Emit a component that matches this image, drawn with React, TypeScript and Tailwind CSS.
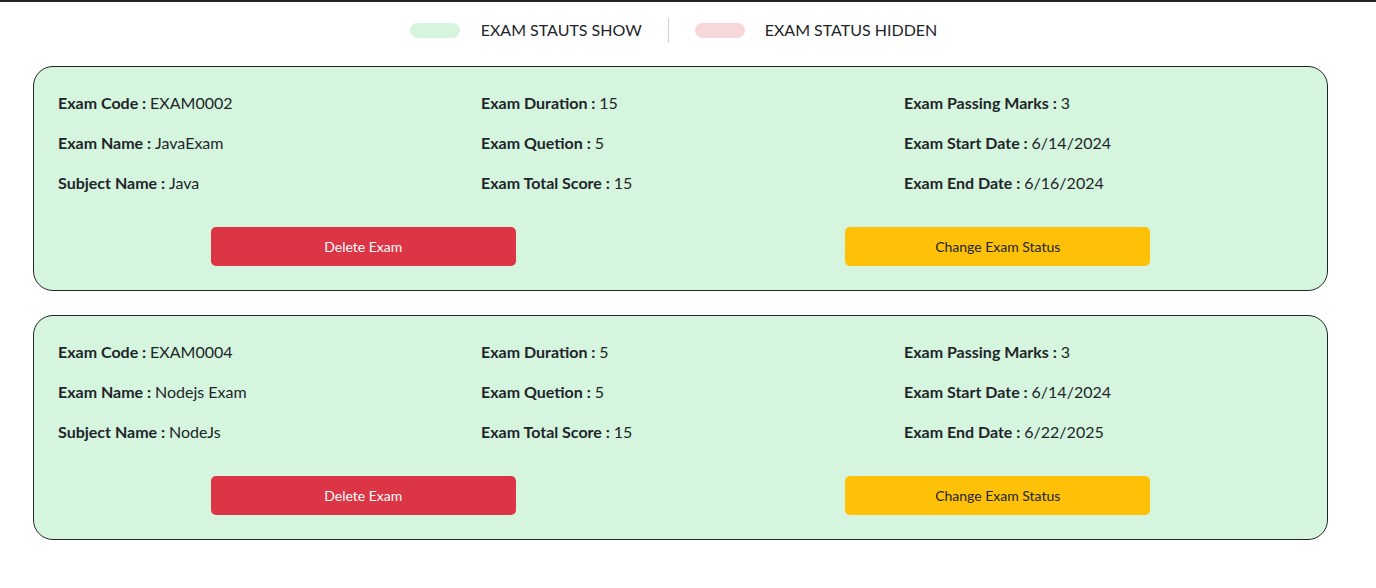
import React from 'react';

type Exam = {
  code: string;
  name: string;
  subject: string;
  duration: number;
  questions: number;
  totalScore: number;
  passing: number;
  start: string;
  end: string;
};

const exams: Exam[] = [
  { code: 'EXAM0002', name: 'JavaExam', subject: 'Java', duration: 15, questions: 5, totalScore: 15, passing: 3, start: '6/14/2024', end: '6/16/2024' },
  { code: 'EXAM0004', name: 'Nodejs Exam', subject: 'NodeJs', duration: 5, questions: 5, totalScore: 15, passing: 3, start: '6/14/2024', end: '6/22/2025' },
];

const Field = ({ label, value }: { label: string; value: React.ReactNode }) => (
  <p className="h-6 leading-6">
    <span className="font-bold">{label} : </span>
    {value}
  </p>
);

const ExamCard = ({ exam }: { exam: Exam }) => (
  <div className="rounded-[20px] border border-[#212529] bg-[#d5f5de] pt-6 pb-[23.5px]">
    {/* datos del examen en tres columnas */}
    <div className="grid grid-cols-3 px-3">
      <div className="flex flex-col gap-4 pl-3">
        <Field label="Exam Code" value={exam.code} />
        <Field label="Exam Name" value={exam.name} />
        <Field label="Subject Name" value={exam.subject} />
      </div>
      <div className="flex flex-col gap-4 pl-3">
        <Field label="Exam Duration" value={exam.duration} />
        <Field label="Exam Quetion" value={exam.questions} />
        <Field label="Exam Total Score" value={exam.totalScore} />
      </div>
      <div className="flex flex-col gap-4 pl-3">
        <Field label="Exam Passing Marks" value={exam.passing} />
        <Field label="Exam Start Date" value={exam.start} />
        <Field label="Exam End Date" value={exam.end} />
      </div>
    </div>

    {/* botones de accion */}
    <div className="mt-8 grid grid-cols-2 px-3">
      <div className="flex justify-center">
        <button className="h-[39px] w-[305px] rounded-[5px] bg-[#dc3545] text-sm text-white">Delete Exam</button>
      </div>
      <div className="flex justify-center">
        <button className="h-[39px] w-[305px] rounded-[5px] bg-[#ffc107] text-sm text-[#212529]">Change Exam Status</button>
      </div>
    </div>
  </div>
);

export default function App() {
  return (
    <div className="min-h-[588px] border-t-2 border-[#212529] bg-white text-base text-[#212529] [font-family:Lato,'Noto_Sans',sans-serif]">
      <div className="w-[1361px]">
        {/* leyenda de colores */}
        <div className="flex h-[54px] items-center justify-center pr-[14px] pt-[2px]">
          <span className="h-[15px] w-[50px] rounded-full bg-[#d5f5de]" />
          <span className="ml-[21px] uppercase">Exam Stauts Show</span>
          <span className="mx-[26px] h-[25px] w-px bg-[#cfcfcf]" />
          <span className="h-[15px] w-[50px] rounded-full bg-[#f8d7da]" />
          <span className="ml-5 uppercase">Exam Status Hidden</span>
        </div>

        <div className="mx-[33px] mt-[10px] flex flex-col gap-[24.5px]">
          {exams.map(exam => (
            <ExamCard key={exam.code} exam={exam} />
          ))}
        </div>
      </div>
    </div>
  );
}
